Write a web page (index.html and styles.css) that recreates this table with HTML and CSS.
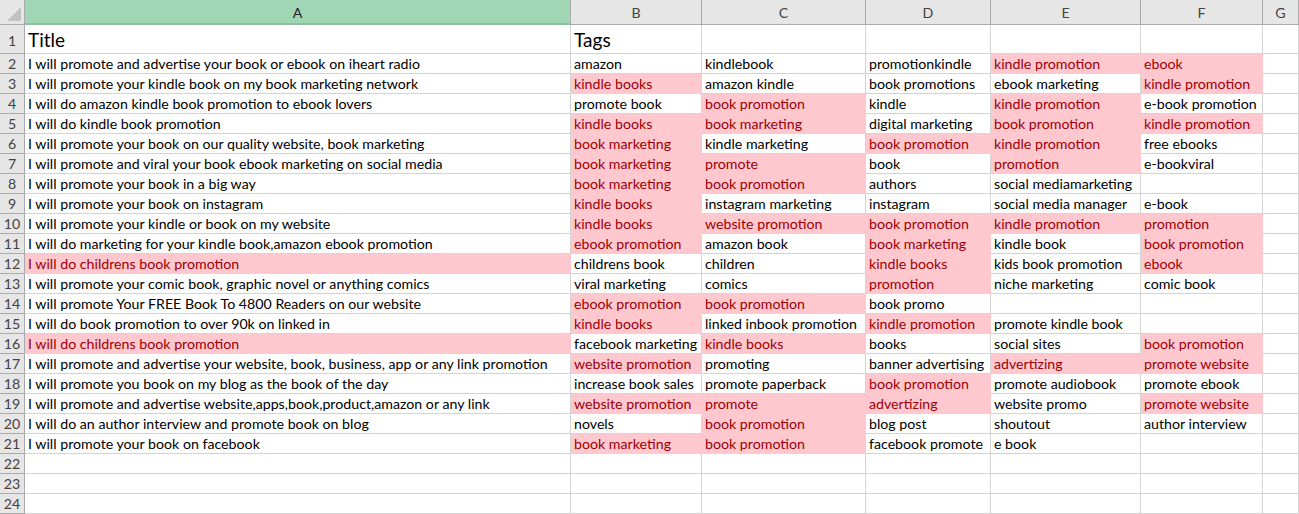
FILE: index.html
```html
<!DOCTYPE html>
<html lang="en">
<head>
    <meta charset="UTF-8">
    <title>Book promotion tags</title>
    <link rel="stylesheet" href="styles.css">
</head>
<body>
    <div class="sheet">
        <!-- column headings -->
        <div class="corner"><span class="tri"></span></div>
        <div class="colhead selected">A</div>
        <div class="colhead">B</div>
        <div class="colhead">C</div>
        <div class="colhead">D</div>
        <div class="colhead">E</div>
        <div class="colhead">F</div>
        <div class="colhead">G</div>

        <div class="rownum big">1</div>
        <div class="cell big">Title</div><div class="cell big">Tags</div><div class="cell"></div><div class="cell"></div><div class="cell"></div><div class="cell"></div><div class="cell"></div>

        <div class="rownum">2</div>
        <div class="cell">I will promote and advertise your book or ebook on iheart radio</div><div class="cell">amazon</div><div class="cell">kindlebook</div><div class="cell">promotionkindle</div><div class="cell bad">kindle promotion</div><div class="cell bad">ebook</div><div class="cell"></div>

        <div class="rownum">3</div>
        <div class="cell">I will promote your kindle book on my book marketing network</div><div class="cell bad">kindle books</div><div class="cell">amazon kindle</div><div class="cell">book promotions</div><div class="cell">ebook marketing</div><div class="cell bad">kindle promotion</div><div class="cell"></div>

        <div class="rownum">4</div>
        <div class="cell">I will do amazon kindle book promotion to ebook lovers</div><div class="cell">promote book</div><div class="cell bad">book promotion</div><div class="cell">kindle</div><div class="cell bad">kindle promotion</div><div class="cell">e-book promotion</div><div class="cell"></div>

        <div class="rownum">5</div>
        <div class="cell">I will do kindle book promotion</div><div class="cell bad">kindle books</div><div class="cell bad">book marketing</div><div class="cell">digital marketing</div><div class="cell bad">book promotion</div><div class="cell bad">kindle promotion</div><div class="cell"></div>

        <div class="rownum">6</div>
        <div class="cell">I will promote your book on our quality website, book marketing</div><div class="cell bad">book marketing</div><div class="cell">kindle marketing</div><div class="cell bad">book promotion</div><div class="cell bad">kindle promotion</div><div class="cell">free ebooks</div><div class="cell"></div>

        <div class="rownum">7</div>
        <div class="cell">I will promote and viral your book ebook marketing on social media</div><div class="cell bad">book marketing</div><div class="cell bad">promote</div><div class="cell">book</div><div class="cell bad">promotion</div><div class="cell">e-bookviral</div><div class="cell"></div>

        <div class="rownum">8</div>
        <div class="cell">I will promote your book in a big way</div><div class="cell bad">book marketing</div><div class="cell bad">book promotion</div><div class="cell">authors</div><div class="cell">social mediamarketing</div><div class="cell"></div><div class="cell"></div>

        <div class="rownum">9</div>
        <div class="cell">I will promote your book on instagram</div><div class="cell bad">kindle books</div><div class="cell">instagram marketing</div><div class="cell">instagram</div><div class="cell">social media manager</div><div class="cell">e-book</div><div class="cell"></div>

        <div class="rownum">10</div>
        <div class="cell">I will promote your kindle or book on my website</div><div class="cell bad">kindle books</div><div class="cell bad">website promotion</div><div class="cell bad">book promotion</div><div class="cell bad">kindle promotion</div><div class="cell bad">promotion</div><div class="cell"></div>

        <div class="rownum">11</div>
        <div class="cell">I will do marketing for your kindle book,amazon ebook promotion</div><div class="cell bad">ebook promotion</div><div class="cell">amazon book</div><div class="cell bad">book marketing</div><div class="cell">kindle book</div><div class="cell bad">book promotion</div><div class="cell"></div>

        <div class="rownum">12</div>
        <div class="cell bad">I will do childrens book promotion</div><div class="cell">childrens book</div><div class="cell">children</div><div class="cell bad">kindle books</div><div class="cell">kids book promotion</div><div class="cell bad">ebook</div><div class="cell"></div>

        <div class="rownum">13</div>
        <div class="cell">I will promote your comic book, graphic novel or anything comics</div><div class="cell">viral marketing</div><div class="cell">comics</div><div class="cell bad">promotion</div><div class="cell">niche marketing</div><div class="cell">comic book</div><div class="cell"></div>

        <div class="rownum">14</div>
        <div class="cell">I will promote Your FREE Book To 4800 Readers on our website</div><div class="cell bad">ebook promotion</div><div class="cell bad">book promotion</div><div class="cell">book promo</div><div class="cell"></div><div class="cell"></div><div class="cell"></div>

        <div class="rownum">15</div>
        <div class="cell">I will do book promotion to over 90k on linked in</div><div class="cell bad">kindle books</div><div class="cell">linked inbook promotion</div><div class="cell bad">kindle promotion</div><div class="cell">promote kindle book</div><div class="cell"></div><div class="cell"></div>

        <div class="rownum">16</div>
        <div class="cell bad">I will do childrens book promotion</div><div class="cell">facebook marketing</div><div class="cell bad">kindle books</div><div class="cell">books</div><div class="cell">social sites</div><div class="cell bad">book promotion</div><div class="cell"></div>

        <div class="rownum">17</div>
        <div class="cell">I will promote and advertise your website, book, business, app or any link promotion</div><div class="cell bad">website promotion</div><div class="cell">promoting</div><div class="cell">banner advertising</div><div class="cell bad">advertizing</div><div class="cell bad">promote website</div><div class="cell"></div>

        <div class="rownum">18</div>
        <div class="cell">I will promote you book on my blog as the book of the day</div><div class="cell">increase book sales</div><div class="cell">promote paperback</div><div class="cell bad">book promotion</div><div class="cell">promote audiobook</div><div class="cell">promote ebook</div><div class="cell"></div>

        <div class="rownum">19</div>
        <div class="cell">I will promote and advertise website,apps,book,product,amazon or any link</div><div class="cell bad">website promotion</div><div class="cell bad">promote</div><div class="cell bad">advertizing</div><div class="cell">website promo</div><div class="cell bad">promote website</div><div class="cell"></div>

        <div class="rownum">20</div>
        <div class="cell">I will do an author interview and promote book on blog</div><div class="cell">novels</div><div class="cell bad">book promotion</div><div class="cell">blog post</div><div class="cell">shoutout</div><div class="cell">author interview</div><div class="cell"></div>

        <div class="rownum">21</div>
        <div class="cell">I will promote your book on facebook</div><div class="cell bad">book marketing</div><div class="cell bad">book promotion</div><div class="cell">facebook promote</div><div class="cell">e book</div><div class="cell"></div><div class="cell"></div>

        <div class="rownum">22</div>
        <div class="cell"></div><div class="cell"></div><div class="cell"></div><div class="cell"></div><div class="cell"></div><div class="cell"></div><div class="cell"></div>

        <div class="rownum">23</div>
        <div class="cell"></div><div class="cell"></div><div class="cell"></div><div class="cell"></div><div class="cell"></div><div class="cell"></div><div class="cell"></div>

        <div class="rownum">24</div>
        <div class="cell"></div><div class="cell"></div><div class="cell"></div><div class="cell"></div><div class="cell"></div><div class="cell"></div><div class="cell"></div>
    </div>
</body>
</html>
```

FILE: styles.css
```css
body {
    margin: 0;
    padding: 0;
    background-color: #fff;
    font-family: 'Lato', 'Open Sans', sans-serif;
    font-size: 14.2px;
    color: #000;
    overflow: hidden;
}
.sheet {
    display: grid;
    grid-template-columns: 25px 546px 131px 164px 125px 150px 122px 1fr;
    grid-template-rows: 25px 29px repeat(23, 20px);
    width: 1299px;
    height: 514px;
}
.sheet > div {
    box-sizing: border-box;
    border-right: 1px solid #d4d4d4;
    border-bottom: 1px solid #d4d4d4;
    white-space: nowrap;
    overflow: visible;
}
.corner {
    position: relative;
    background-color: #e6e6e6;
    border-color: #ababab !important;
}
.tri {
    position: absolute;
    right: 3px;
    bottom: 3px;
    width: 0;
    height: 0;
    border-left: 14px solid transparent;
    border-bottom: 14px solid #c2c2c2;
}
.colhead {
    background-color: #e6e6e6;
    color: #444;
    text-align: center;
    line-height: 24px;
    padding-top: 1px;
    border-right-color: #ababab !important;
    border-bottom-color: #ababab !important;
}
.colhead.selected {
    background-color: #a0d6b4;
    color: #222;
    border-bottom: 2px solid #8cbfa0 !important;
}
.rownum {
    background-color: #e6e6e6;
    color: #444;
    text-align: center;
    line-height: 20px;
    border-right-color: #ababab !important;
    border-bottom-color: #ababab !important;
}
.rownum.big {
    line-height: 32px;
}
.cell {
    padding-left: 3px;
    line-height: 20px;
    position: relative;
    z-index: 1;
}
.cell.big {
    font-size: 19px;
    line-height: 30px;
}
.cell.bad {
    background-color: #ffc7ce;
    color: #9c0006;
    border-color: #ffc7ce !important;
}
```
